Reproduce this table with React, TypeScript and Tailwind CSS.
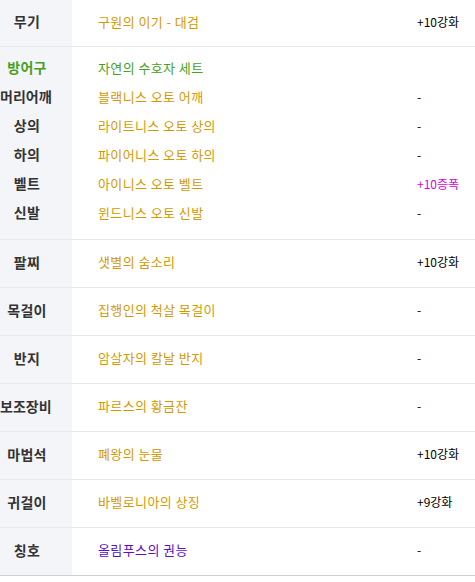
import React from "react";

type Item = { slot: string; name: string; color: string; extra: string; extraColor?: string };

const GOLD = "text-[#d39a00]";
const font = { fontFamily: '"Noto Sans CJK KR", "Noto Sans", sans-serif' };

const rows: Item[] = [
  { slot: "팔찌", name: "샛별의 숨소리", color: GOLD, extra: "+10강화" },
  { slot: "목걸이", name: "집행인의 척살 목걸이", color: GOLD, extra: "-" },
  { slot: "반지", name: "암살자의 칼날 반지", color: GOLD, extra: "-" },
  { slot: "보조장비", name: "파르스의 황금잔", color: GOLD, extra: "-" },
  { slot: "마법석", name: "폐왕의 눈물", color: GOLD, extra: "+10강화" },
  { slot: "귀걸이", name: "바벨로니아의 상징", color: GOLD, extra: "+9강화" },
  { slot: "칭호", name: "올림푸스의 권능", color: "text-[#5a0fc8]", extra: "-" },
];

const armor: Item[] = [
  { slot: "방어구", name: "자연의 수호자 세트", color: "text-[#46a01e]", extra: "" },
  { slot: "머리어깨", name: "블랙니스 오토 어깨", color: GOLD, extra: "-" },
  { slot: "상의", name: "라이트니스 오토 상의", color: GOLD, extra: "-" },
  { slot: "하의", name: "파이어니스 오토 하의", color: GOLD, extra: "-" },
  { slot: "벨트", name: "아이니스 오토 벨트", color: GOLD, extra: "+10증폭", extraColor: "text-[#e000e0]" },
  { slot: "신발", name: "윈드니스 오토 신발", color: GOLD, extra: "-" },
];

const name = "text-[13px] tracking-[0.4px]";

// 4글자 라벨은 칸을 꽉 채움
const labelCls = (slot: string) =>
  `whitespace-nowrap text-[14px] font-bold flex items-center ${
    slot.length >= 4 ? "justify-start pl-0" : "justify-center pr-[18px] tracking-[0.3px]"
  }`;

const Row = ({ item, h, border = "border-[#e8e8ea]" }: { item: Item; h: string; border?: string }) => (
  <div className={`flex border-b ${border} ${h}`}>
    <div className={`w-[72px] shrink-0 bg-[#f4f5f9] pb-[3px] text-[#333] ${labelCls(item.slot)}`}>{item.slot}</div>
    <div className={`flex-1 flex items-center pl-[26px] pb-[3px] ${name} ${item.color}`}>{item.name}</div>
    <div className="w-[58px] shrink-0 flex items-center pb-[3px] text-[12px] text-black">{item.extra}</div>
  </div>
);

export default function App() {
  return (
    <div className="w-[475px] h-[582px] bg-white" style={font}>
      <Row item={{ slot: "무기", name: "구원의 이기 - 대검", color: GOLD, extra: "+10강화" }} h="h-[47px]" />

      {/* 방어구 세트 */}
      <div className="flex border-b border-[#e8e8ea] h-[193px]">
        <div className="w-[72px] shrink-0 bg-[#f4f5f9] flex flex-col pt-[6px] pb-[12px]">
          {armor.map((a, i) => (
            <div key={a.slot} className={`h-[29px] ${labelCls(a.slot)} ${i === 0 ? "text-[#46a01e]" : "text-[#333]"}`}>
              {a.slot}
            </div>
          ))}
        </div>
        <div className="flex-1 flex flex-col pt-[6px] pb-[12px] pl-[26px]">
          {armor.map((a) => (
            <div key={a.name} className={`h-[29px] flex items-center ${name} ${a.color}`}>
              {a.name}
            </div>
          ))}
        </div>
        <div className="w-[58px] shrink-0 flex flex-col pt-[6px] pb-[12px]">
          {armor.map((a) => (
            <div key={a.slot} className={`h-[29px] flex items-center text-[12px] ${a.extraColor ?? "text-black"}`}>
              {a.extra}
            </div>
          ))}
        </div>
      </div>

      {rows.map((r, i) => (
        <Row key={r.slot} item={r} h="h-[48px]" border={i === rows.length - 1 ? "border-[#cfcfd3]" : "border-[#e8e8ea]"} />
      ))}
    </div>
  );
}
